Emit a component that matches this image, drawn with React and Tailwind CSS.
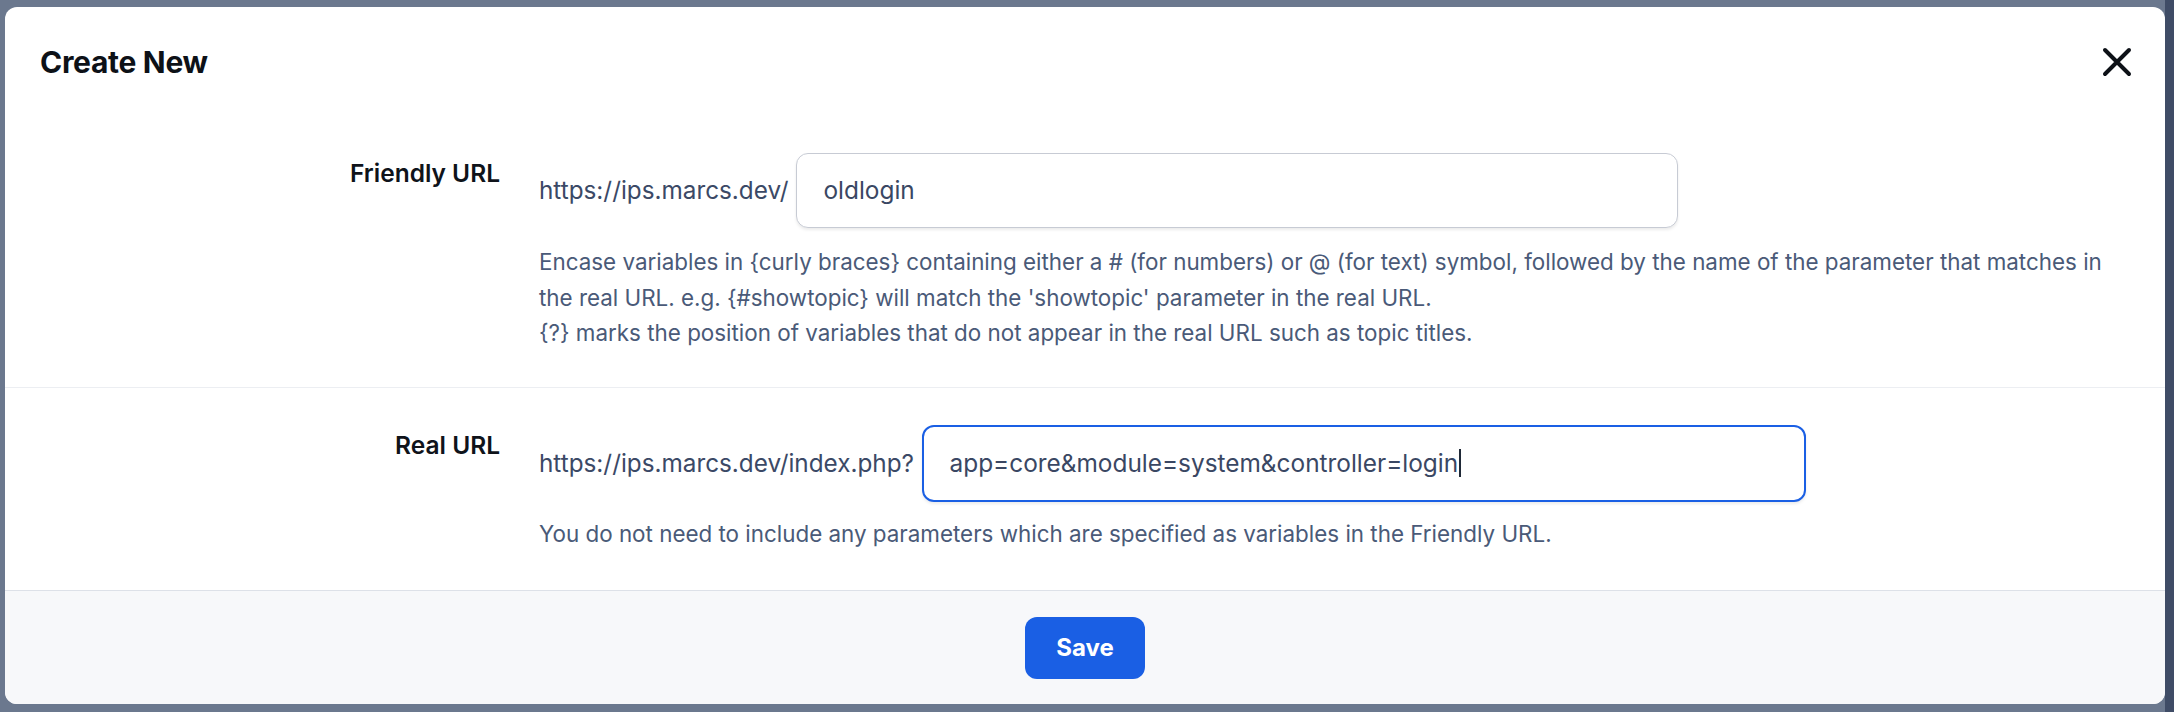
const FONT = "font-['Inter','Noto_Sans',sans-serif]";

const FieldRow = ({ label, prefix, value, focused, help, className }) => (
  <div className={`flex ${className}`}>
    <div className="w-[534px] shrink-0 pr-[39px] pt-[4px] text-right text-[24.5px] leading-[32px] font-semibold text-[#0f131a] whitespace-nowrap">
      {label}
    </div>
    <div className="flex-1">
      <div className="flex items-center gap-[8px]">
        <span className="text-[24.3px] text-[#3b4966] whitespace-nowrap">{prefix}</span>
        <div
          className={
            focused
              ? "w-[884px] h-[77px] rounded-[12px] border-[2.5px] border-[#1a5fe4] bg-white flex items-center pl-[25.5px] shadow-[0_2px_3px_rgba(0,0,0,0.08)]"
              : "w-[882px] h-[75px] rounded-[12px] border border-[#c7cbd4] bg-white flex items-center pl-[26px] shadow-[0_2px_3px_rgba(0,0,0,0.08)]"
          }
        >
          <span className="text-[24.4px] text-[#3a4763] whitespace-nowrap">{value}</span>
          {focused && <span className="w-[1.5px] h-[28px] bg-[#1f2937] ml-[1px]" />}
        </div>
      </div>
      <div className="text-[22.4px] leading-[35.5px] text-[#4a5a78]">{help}</div>
    </div>
  </div>
);

export default function App() {
  return (
    <div className={`h-[712px] overflow-hidden bg-[linear-gradient(to_right,#6b788e_2165px,#3f4c66_2165px)] pt-[7px] pl-[5px] pr-[9px] ${FONT}`}>
      <div className="bg-white rounded-[12px] h-[697px] overflow-hidden flex flex-col">
        <div className="h-[110px] shrink-0 flex items-center justify-between pl-[35px] pr-[33px]">
          <h2 className="text-[30px] font-bold tracking-[-0.3px] text-[#0d1117]">Create New</h2>
          <svg width="30" height="30" viewBox="0 0 30 30" className="text-[#0d1117]">
            <path d="M3 3L27 27M27 3L3 27" stroke="currentColor" strokeWidth="4" strokeLinecap="round" />
          </svg>
        </div>

        <FieldRow
          className="pt-[36px] pb-[36px] border-b border-[#eceef2]"
          label="Friendly URL"
          prefix="https://ips.marcs.dev/"
          value="oldlogin"
          help={
            <div className="mt-[16px] whitespace-nowrap">
              Encase variables in {"{curly braces}"} containing either a # (for numbers) or @ (for text) symbol, followed by the name of the parameter that matches in
              <br />
              the real URL. e.g. {"{#showtopic}"} will match the 'showtopic' parameter in the real URL.
              <br />
              {"{?}"} marks the position of variables that do not appear in the real URL such as topic titles.
            </div>
          }
        />

        <FieldRow
          className="pt-[37px] pb-[39px]"
          label="Real URL"
          prefix="https://ips.marcs.dev/index.php?"
          value="app=core&module=system&controller=login"
          focused
          help={
            <div className="mt-[14px]">
              You do not need to include any parameters which are specified as variables in the Friendly URL.
            </div>
          }
        />

        <div className="flex-1 border-t border-[#dde1e8] bg-[#f7f8fa] flex items-center justify-center">
          <button className="w-[120px] h-[62px] rounded-[12px] bg-[#1a5fe4] text-white text-[24px] font-bold">
            Save
          </button>
        </div>
      </div>
    </div>
  );
}
